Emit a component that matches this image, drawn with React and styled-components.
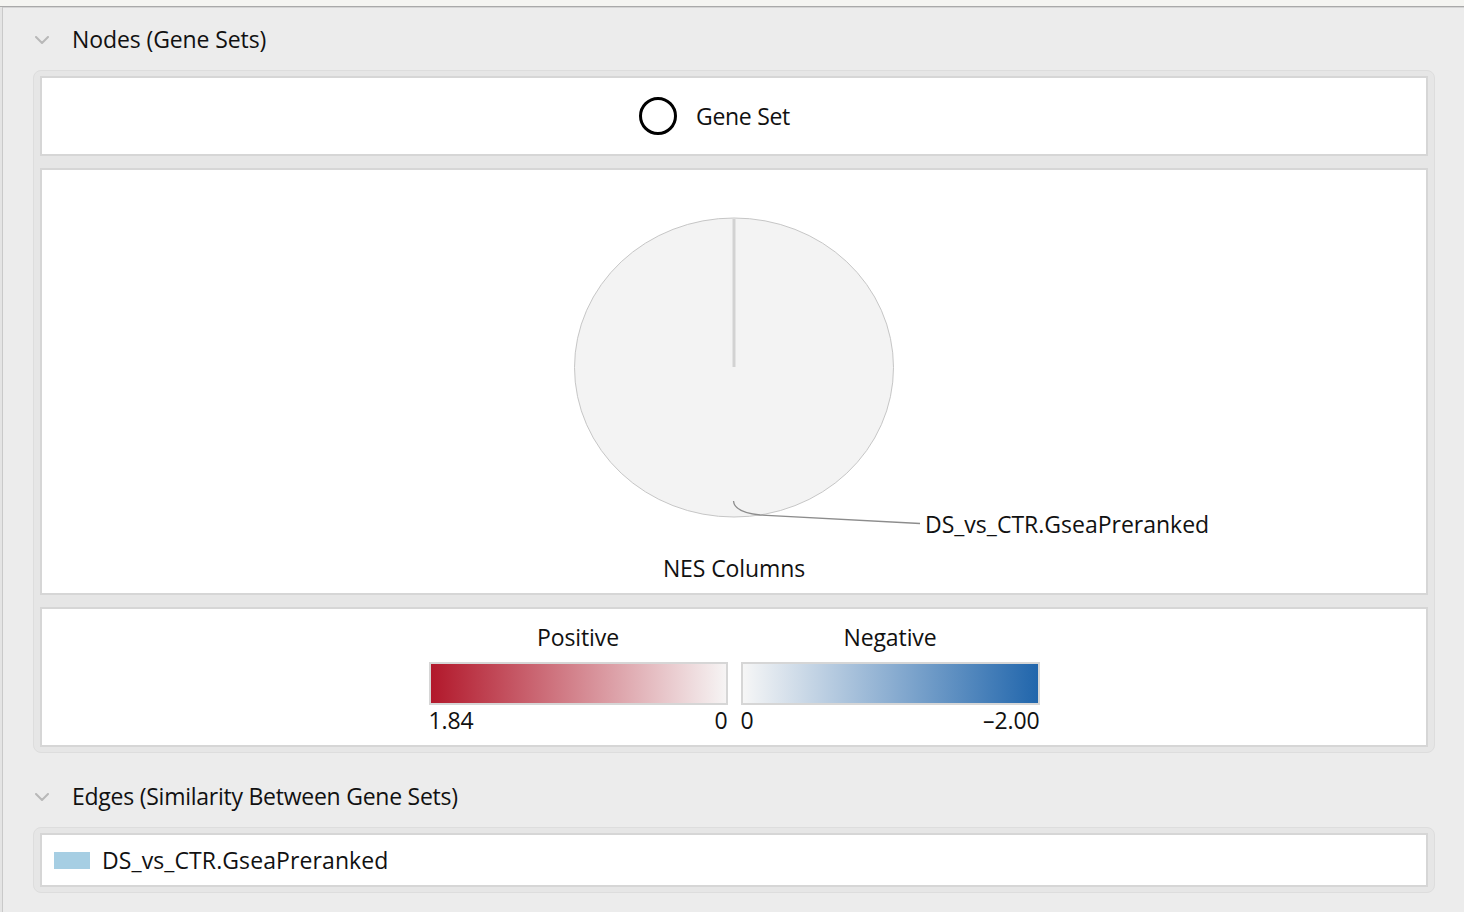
import React from 'react';
import styled, { createGlobalStyle } from 'styled-components';

const GlobalStyle = createGlobalStyle`
  html, body { margin: 0; padding: 0; background: #ececec; }
  body {
    font-family: "Open Sans", "DejaVu Sans", sans-serif;
    color: #111;
    -webkit-font-smoothing: antialiased;
  }
`;

const Window = styled.div`
  width: 1464px;
  height: 912px;
  overflow: hidden;
  background: #ececec;
  display: flex;
  flex-direction: column;
`;

const TitleStrip = styled.div`
  flex: none;
  height: 6px;
  background: #f4f4f1;
  border-bottom: 1px solid #a9a9a9;
  box-shadow: 0 1px 0 #d4d4d4;
`;

const Body = styled.div`
  flex: 1;
  display: flex;
  flex-direction: column;
  padding: 1px 29px 0 33px;
  box-shadow: inset 2px 0 0 #e4e4e4, inset 3px 0 0 #c9c9c9;
`;

const SectionHeader = styled.div`
  flex: none;
  height: 62px;
  display: flex;
  align-items: center;
  padding-left: 2px;
  margin-top: ${(p) => (p.$spaced ? '12px' : '0')};
`;

const Chevron = styled.svg`
  flex: none;
  width: 14px;
  height: 8px;
  margin-right: 23px;
  margin-top: 2px;
`;

const Text = styled.span`
  font-size: 23px;
  font-weight: 500;
  line-height: 28px;
  letter-spacing: ${(p) => p.$ls || '-0.1px'};
  white-space: nowrap;
  color: #111;
`;

const Group = styled.div`
  flex: none;
  display: flex;
  flex-direction: column;
  gap: 12px;
  padding: 5px 6px;
  background: #e6e6e6;
  border: 1px solid #dddddd;
  border-radius: 8px;
`;

const Panel = styled.div`
  box-sizing: border-box;
  height: ${(p) => p.$h}px;
  background: #fff;
  border: 2px solid #d6d6d6;
`;

const ShapeRow = styled(Panel)`
  display: flex;
  align-items: center;
  justify-content: center;
  padding-right: 39px;
`;

const NodeRing = styled.span`
  box-sizing: border-box;
  width: 38px;
  height: 38px;
  border: 3px solid #000;
  border-radius: 50%;
  margin-right: 19px;
  flex: none;
`;

const ChartPanel = styled(Panel)`
  display: flex;
  flex-direction: column;
  align-items: center;
`;

const ChartSvg = styled.svg`
  display: block;
  width: 1384px;
  height: 372px;
  flex: none;
`;

const Caption = styled(Text)`
  margin-top: 12px;
`;

const LegendPanel = styled(Panel)`
  display: flex;
  justify-content: center;
  padding-top: 14px;
`;

const LegendGrid = styled.div`
  display: grid;
  grid-template-columns: 299px 299px;
  column-gap: 13px;
  align-content: start;
`;

const LegendColumn = styled.div`
  display: flex;
  flex-direction: column;
`;

const LegendTitle = styled(Text)`
  text-align: center;
`;

const GradientBar = styled.div`
  box-sizing: border-box;
  height: 43px;
  margin-top: 11px;
  border: 2px solid #d6d6d6;
  background: linear-gradient(to right, ${(p) => p.$from}, ${(p) => p.$to});
`;

const ValueRow = styled.div`
  display: flex;
  justify-content: space-between;
  margin-top: 2px;
  font-size: 23px;
  font-weight: 500;
  line-height: 26px;
  letter-spacing: -0.1px;
`;

const EdgeRow = styled(Panel)`
  display: flex;
  align-items: center;
  padding-left: 12px;
`;

const Swatch = styled.span`
  flex: none;
  width: 36px;
  height: 17px;
  background: ${(p) => p.$color};
  margin-right: 12px;
`;

const ChevronIcon = () => (
  <Chevron viewBox="0 0 14 8">
    <path d="M1 1 L7 7 L13 1" fill="none" stroke="#b8b8b8" strokeWidth="2" strokeLinecap="round" strokeLinejoin="round" />
  </Chevron>
);

const legends = [
  { title: 'Positive', from: '#b2182b', to: '#f6f4f4', left: '1.84', right: '0' },
  { title: 'Negative', from: '#f6f6f6', to: '#2166ac', left: '0', right: '–2.00' },
];

export default function App() {
  return (
    <Window>
      <GlobalStyle />
      <TitleStrip />
      <Body>
        <SectionHeader>
          <ChevronIcon />
          <Text>Nodes (Gene Sets)</Text>
        </SectionHeader>
        <Group>
          <ShapeRow $h={80}>
            <NodeRing />
            <Text $ls="-0.3px">Gene Set</Text>
          </ShapeRow>
          <ChartPanel $h={427}>
            <ChartSvg viewBox="0 0 1384 372">
              <ellipse cx="692" cy="197.5" rx="159.5" ry="149.5" fill="#f3f3f3" stroke="#c6c6c6" strokeWidth="1" />
              <line x1="692" y1="49" x2="692" y2="197" stroke="#d2d2d2" strokeWidth="3" />
              <path d="M691.5 331 C692 338, 700 343, 718 345 L878 353.5" fill="none" stroke="#8c8c8c" strokeWidth="1.3" />
              <text x="883" y="363" fontFamily="Open Sans, DejaVu Sans, sans-serif" fontSize="23" fontWeight="500" letterSpacing="0" fill="#111">
                DS_vs_CTR.GseaPreranked
              </text>
            </ChartSvg>
            <Caption>NES Columns</Caption>
          </ChartPanel>
          <LegendPanel $h={140}>
            <LegendGrid>
              {legends.map((l) => (
                <LegendColumn key={l.title}>
                  <LegendTitle>{l.title}</LegendTitle>
                  <GradientBar $from={l.from} $to={l.to} />
                  <ValueRow>
                    <span>{l.left}</span>
                    <span>{l.right}</span>
                  </ValueRow>
                </LegendColumn>
              ))}
            </LegendGrid>
          </LegendPanel>
        </Group>
        <SectionHeader $spaced>
          <ChevronIcon />
          <Text $ls="-0.25px">Edges (Similarity Between Gene Sets)</Text>
        </SectionHeader>
        <Group>
          <EdgeRow $h={54}>
            <Swatch $color="#a6cee3" />
            <Text $ls="0.1px">DS_vs_CTR.GseaPreranked</Text>
          </EdgeRow>
        </Group>
      </Body>
    </Window>
  );
}
